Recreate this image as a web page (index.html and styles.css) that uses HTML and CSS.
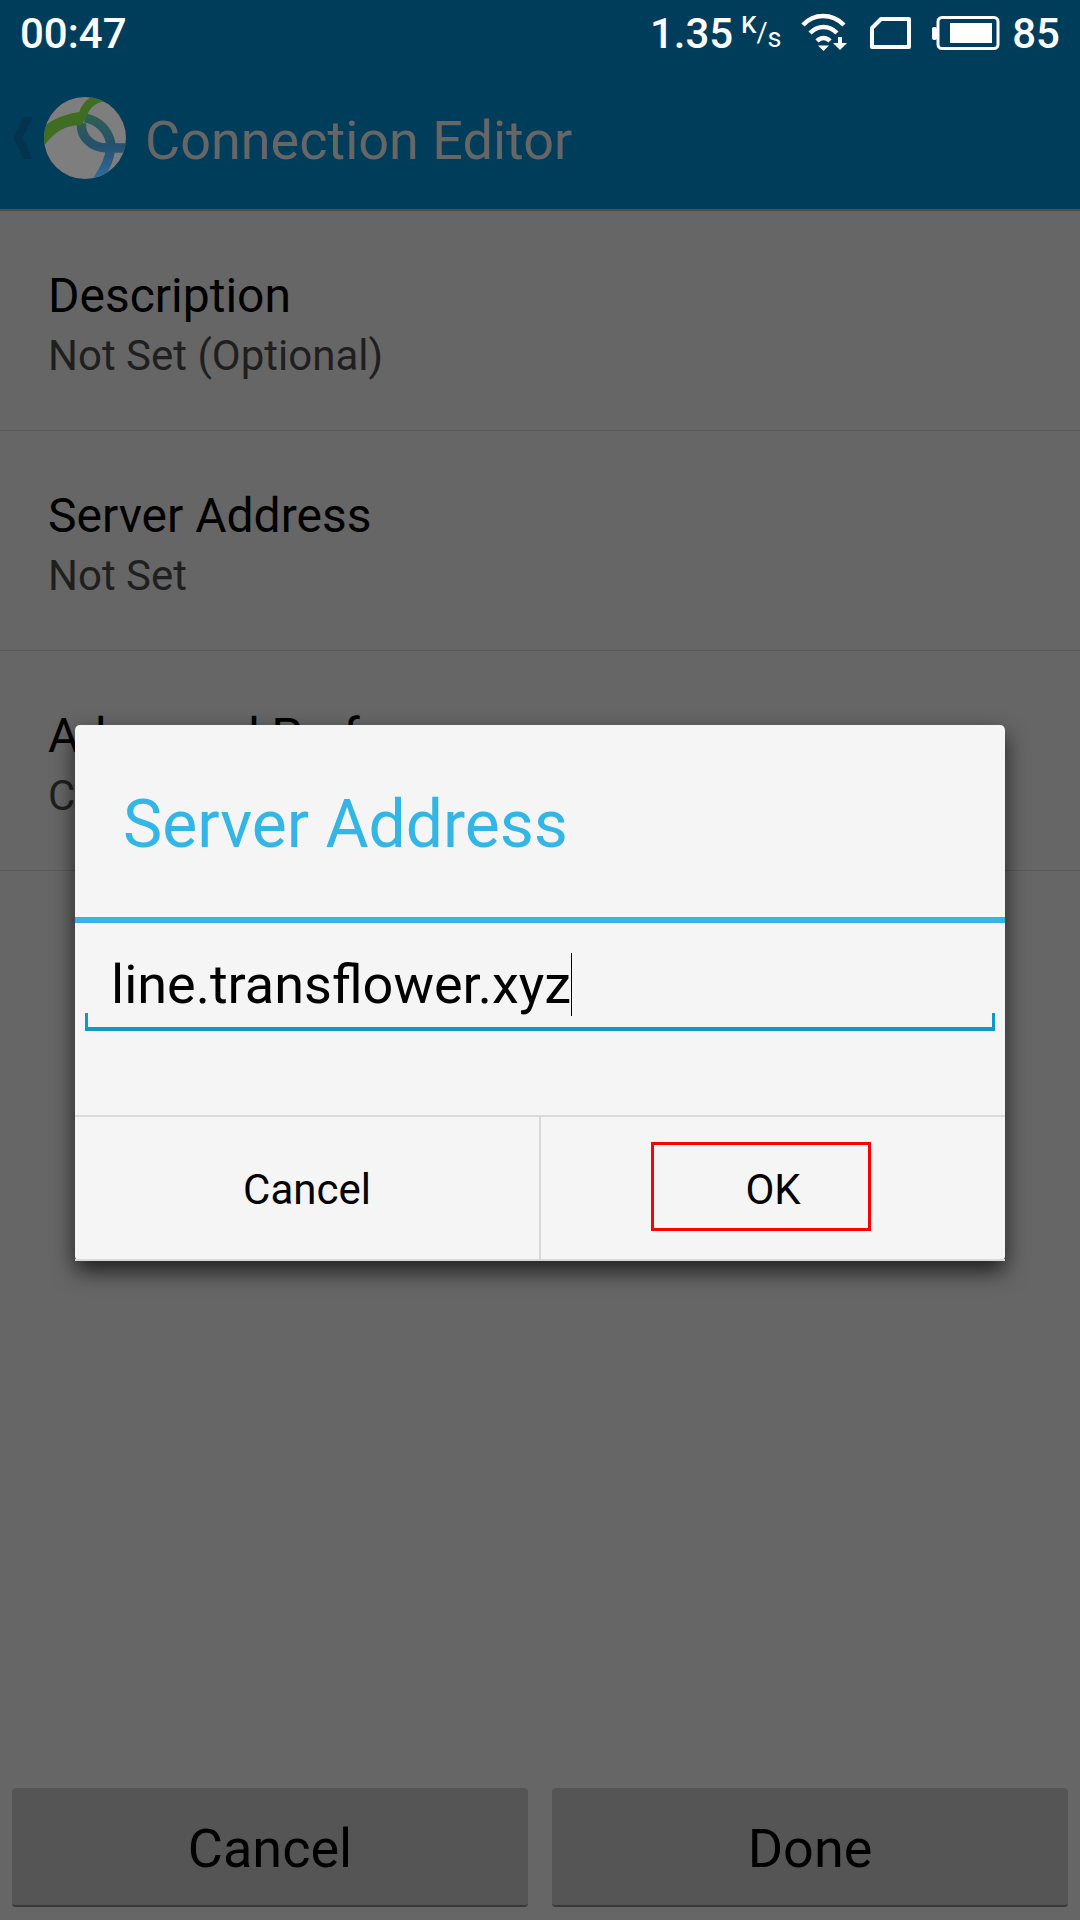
FILE: index.html
```html
<!DOCTYPE html>
<html lang="en">
<head>
    <meta charset="UTF-8">
    <meta name="viewport" content="width=device-width, initial-scale=1.0">
    <title>Connection Editor</title>
    <link rel="stylesheet" href="styles.css">
</head>
<body>
    <div class="screen">
        <header class="topbar">
            <div class="status-bar">
                <span class="clock">00:47</span>
                <div class="status-right">
                    <span class="speed">1.35</span>
                    <span class="speed-unit"><sup>K</sup>/<sub>s</sub></span>
                    <svg class="wifi" width="46" height="40" viewBox="0 0 46 40">
                        <path d="M2 12C13 0 31 0 43 12" fill="none" stroke="#fff" stroke-width="4.500"/>
                        <path d="M9 20C17 12 28 12 36 20" fill="none" stroke="#fff" stroke-width="4.500"/>
                        <path d="M16 28C20 24 25 24 29 28" fill="none" stroke="#fff" stroke-width="4.500"/>
                        <path d="M17 32.500H28L22.500 38Z" fill="#fff"/>
                        <path d="M37 24H41V30H46L39 37L32 30H37Z" fill="#fff"/>
                    </svg>
                    <svg class="sim" width="41" height="32" viewBox="0 0 41 32">
                        <path d="M2 11L11 2H39V30H2Z" fill="none" stroke="#fff" stroke-width="4" stroke-linejoin="round"/>
                    </svg>
                    <svg class="battery" width="68" height="34" viewBox="0 0 68 34">
                        <rect x="0" y="11" width="5" height="13" rx="2" fill="#fff"/>
                        <rect x="6" y="1.500" width="60" height="31" rx="4" fill="none" stroke="#fff" stroke-width="3"/>
                        <rect x="18" y="7" width="42" height="20" fill="#fff"/>
                    </svg>
                    <span class="level">85</span>
                </div>
            </div>
            <div class="action-bar">
                <svg class="back" width="20" height="42" viewBox="40 95 58 125">
                    <path d="M72 95H98L68 157L98 220H72L40 157Z" fill="#03334f"/>
                </svg>
                <svg class="logo" width="82" height="82" viewBox="132 37 246 246">
                    <defs>
                        <clipPath id="logo-clip">
                            <circle cx="255" cy="160" r="123"/>
                        </clipPath>
                        <linearGradient id="band-fade" gradientUnits="userSpaceOnUse" x1="0" y1="100" x2="0" y2="280">
                            <stop offset="0" stop-color="#2d5f55"/>
                            <stop offset="0.45" stop-color="#25506c"/>
                            <stop offset="1" stop-color="#2f6c9a"/>
                        </linearGradient>
                    </defs>
                    <g clip-path="url(#logo-clip)">
                        <rect x="132" y="37" width="246" height="246" fill="#7e7e7e"/>
                        <path d="M255 100C300 108 325 140 332 175C335 215 315 250 290 290" fill="none" stroke="url(#band-fade)" stroke-width="28"/>
                        <path d="M245 115C240 155 275 190 320 190H385" fill="none" stroke="url(#band-fade)" stroke-width="28"/>
                        <path d="M130 128C160 100 200 88 238 82C245 60 258 45 275 37L315 50C285 55 270 70 262 90L245 122C200 120 165 140 136 178L130 170Z" fill="#3f6d21"/>
                    </g>
                </svg>
                <h1 class="app-title">Connection Editor</h1>
            </div>
        </header>

        <main class="pref-list">
            <div class="pref-row">
                <div class="pref-name">Description</div>
                <div class="pref-value">Not Set (Optional)</div>
            </div>
            <div class="pref-row">
                <div class="pref-name">Server Address</div>
                <div class="pref-value">Not Set</div>
            </div>
            <div class="pref-row">
                <div class="pref-name">Advanced Preferences</div>
                <div class="pref-value">Configure</div>
            </div>
        </main>

        <footer class="footer">
            <div class="footer-btn">Cancel</div>
            <div class="footer-btn">Done</div>
        </footer>

        <div class="dialog">
            <div class="dialog-title">Server Address</div>
            <div class="dialog-body">
                <div class="input">
                    <span class="input-text">line.transflower.xyz</span><span class="caret"></span>
                </div>
            </div>
            <div class="dialog-actions">
                <div class="dialog-btn">Cancel</div>
                <div class="dialog-btn">OK<span class="highlight"></span></div>
            </div>
        </div>
    </div>
</body>
</html>
```

FILE: styles.css
```css
* {
    box-sizing: border-box;
}

body {
    margin: 0;
    font-family: Roboto, "Liberation Sans", sans-serif;
    background-color: #666;
}

.screen {
    position: relative;
    width: 1080px;
    height: 1920px;
    display: flex;
    flex-direction: column;
    overflow: hidden;
}

.topbar {
    height: 211px;
    background-color: #003d5a;
    border-bottom: 2px solid #4d4d4d;
}

.status-bar {
    height: 66px;
    display: flex;
    justify-content: space-between;
    align-items: center;
    padding: 0 20px;
    color: #fff;
}

.clock {
    font-size: 42px;
    font-weight: 500;
}

.status-right {
    display: flex;
    align-items: center;
}

.speed,
.level {
    font-size: 42px;
    font-weight: 500;
}

.speed-unit {
    width: 44px;
    margin-left: 8px;
    font-size: 27px;
    line-height: 1;
}

.speed-unit sup {
    font-size: 24px;
    font-weight: 500;
    vertical-align: 9px;
    line-height: 0;
}

.speed-unit sub {
    font-size: 27px;
    vertical-align: -5px;
    line-height: 0;
}

.wifi {
    margin-left: 16px;
}

.sim {
    margin-left: 23px;
}

.battery {
    margin-left: 21px;
}

.level {
    margin-left: 12px;
}

.action-bar {
    height: 143px;
    display: flex;
    align-items: center;
    padding-left: 13px;
}

.back {
    flex: none;
}

.logo {
    flex: none;
    margin-left: 11px;
}

.app-title {
    margin: 6px 0 0 19px;
    font-size: 54px;
    font-weight: 400;
    color: #666;
}

.pref-list {
    flex: 1;
}

.pref-row {
    height: 220px;
    padding: 56px 48px 0;
    border-bottom: 1px solid #5a5a5a;
}

.pref-name {
    font-size: 48px;
    line-height: 58px;
    color: #000;
}

.pref-value {
    font-size: 42px;
    line-height: 62px;
    color: #1f1f1f;
}

.footer {
    display: flex;
    gap: 24px;
    padding: 0 12px 13px;
}

.footer-btn {
    flex: 1;
    height: 119px;
    padding-top: 3px;
    display: flex;
    align-items: center;
    justify-content: center;
    background-color: #555;
    border-radius: 4px;
    border-bottom: 2px solid #383838;
    font-size: 54px;
    color: #000;
}

/* dialog sits over the dimmed page */
.dialog {
    position: absolute;
    left: 75px;
    top: 725px;
    width: 930px;
    height: 536px;
    display: flex;
    flex-direction: column;
    background-color: #f5f5f5;
    border-radius: 5px;
    box-shadow: 0 10px 22px rgba(0, 0, 0, 0.7);
}

.dialog-title {
    height: 198px;
    padding: 6px 0 0 48px;
    display: flex;
    align-items: center;
    font-size: 66px;
    color: #33b5e5;
    border-bottom: 6px solid #33b5e5;
}

.dialog-body {
    height: 194px;
    padding: 20px 10px 0;
    border-bottom: 2px solid #d9d9d9;
}

.input {
    position: relative;
    height: 88px;
    padding: 0 0 2px 26px;
    display: flex;
    align-items: center;
    border-bottom: 4px solid #0f99c9;
    font-size: 54px;
    color: #000;
}

.input::before,
.input::after {
    content: "";
    position: absolute;
    bottom: 0;
    width: 3px;
    height: 14px;
    background-color: #0f99c9;
}

.input::before {
    left: 0;
}

.input::after {
    right: 0;
}

.caret {
    width: 1px;
    height: 63px;
    background-color: #000;
}

.dialog-actions {
    flex: 1;
    display: flex;
}

.dialog-btn {
    position: relative;
    flex: 1;
    padding-top: 3px;
    display: flex;
    align-items: center;
    justify-content: center;
    font-size: 42px;
    color: #000;
    border-bottom: 2px solid #d9d9d9;
}

.dialog-btn:first-child {
    border-right: 2px solid #d9d9d9;
}

.highlight {
    position: absolute;
    left: 110px;
    top: 25px;
    width: 220px;
    height: 89px;
    border: 3px solid #f00;
}
```
